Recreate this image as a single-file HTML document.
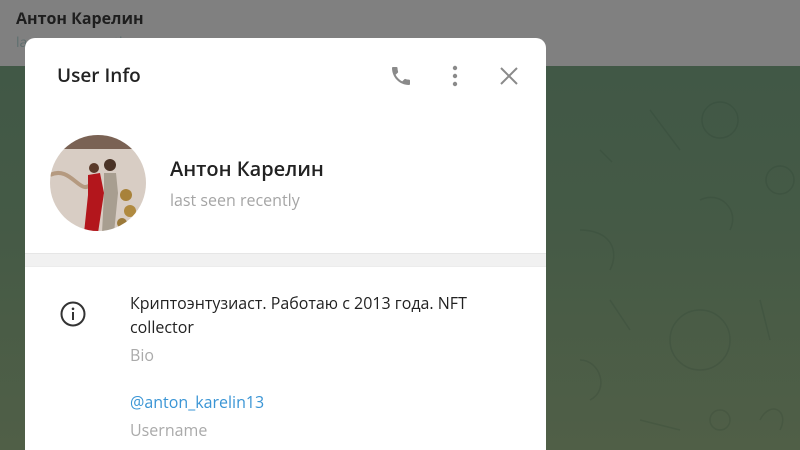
<!DOCTYPE html>
<html style="width:800px;height:450px;overflow:hidden"><head><meta charset="utf-8"><style>
*{margin:0;padding:0;box-sizing:border-box}
body{width:800px;height:450px;overflow:hidden;font-family:"Open Sans","Liberation Sans","DejaVu Sans",sans-serif;position:relative;background:linear-gradient(180deg,#3f5746 0%,#455a46 50%,#505f47 100%)}
.top{position:absolute;left:0;top:0;width:800px;height:66px;background:#808080}
.top .n{position:absolute;left:16px;top:7px;font-size:16px;font-weight:bold;color:#1e1e1e}
.top .s{position:absolute;left:16px;top:33px;font-size:14px;color:#5e6e6e}
.modal{position:absolute;left:25px;top:38px;width:521px;height:412px;background:#fff;border-radius:10px 10px 0 0;overflow:hidden}
.title{position:absolute;left:32px;top:24px;font-size:19px;color:#222;font-weight:600}
.name{position:absolute;left:145px;top:117px;font-size:20px;color:#222;font-weight:600}
.seen{position:absolute;left:145px;top:151px;font-size:16px;color:#a5a5a5}
.sep{position:absolute;left:0;top:215px;width:521px;height:14px;background:#f1f1f1;border-top:1px solid #e6e6e6;border-bottom:1px solid #ececec}
.t{position:absolute;left:105px;font-size:16px;color:#222;line-height:24px}
.g{position:absolute;left:105px;font-size:16px;color:#aaa}
.pat{position:absolute;fill:none;stroke:rgba(30,50,35,.14);stroke-width:1.5}
</style></head><body>
<svg class="pat" width="800" height="450" style="left:0;top:0">
<circle cx="720" cy="120" r="18"/><path d="M650 110l30 40M700 200c20-10 40 10 30 30"/><circle cx="700" cy="340" r="30"/><path d="M610 300l20 30M760 300l10 40M580 360c20 0 30 30 10 40M640 420l40 10M760 420c10-20 30-10 20 10M600 150l12 12M580 230c30 0 40 20 30 40"/><circle cx="720" cy="420" r="10"/><circle cx="780" cy="180" r="14"/>
</svg>
<div class="top"><div class="n">Антон Карелин</div><div class="s">last seen recently</div></div>
<div class="modal">
<div class="title">User Info</div>
<svg style="position:absolute;left:364px;top:26px" width="24" height="24" viewBox="0 0 24 24"><path d="M6.6 10.8c1.4 2.8 3.8 5.1 6.6 6.6l2.2-2.2c.3-.3.7-.4 1-.2 1.1.4 2.3.6 3.6.6.6 0 1 .4 1 1V20c0 .6-.4 1-1 1C10.6 21 3 13.4 3 4c0-.6.4-1 1-1h3.5c.6 0 1 .4 1 1 0 1.3.2 2.5.6 3.6.1.3 0 .7-.2 1z" fill="#8a8a8a"/></svg>
<svg style="position:absolute;left:420px;top:26px" width="20" height="24"><circle cx="10" cy="4" r="2.2" fill="#8a8a8a"/><circle cx="10" cy="12" r="2.2" fill="#8a8a8a"/><circle cx="10" cy="20" r="2.2" fill="#8a8a8a"/></svg>
<svg style="position:absolute;left:474px;top:28px" width="20" height="20"><path d="M2 2L18 18M18 2L2 18" stroke="#8a8a8a" stroke-width="2"/></svg>
<svg style="position:absolute;left:25px;top:97px" width="96" height="96" viewBox="0 0 96 96"><defs><clipPath id="c"><circle cx="48" cy="48" r="48"/></clipPath></defs><g clip-path="url(#c)"><rect width="96" height="96" fill="#d8cdc4"/><rect width="96" height="14" fill="#7a6254"/><path d="M0 40c20-10 30 20 40 10" stroke="#b59a80" stroke-width="4" fill="none"/><path d="M38 40l12-2 4 20-6 40h-14l4-38z" fill="#b3161c"/><circle cx="44" cy="33" r="5" fill="#5a3a2a"/><path d="M54 38h12l2 20-4 40h-12l2-40z" fill="#a89e90"/><circle cx="60" cy="30" r="6" fill="#4a3326"/><circle cx="76" cy="60" r="6" fill="#a8823a"/><circle cx="80" cy="76" r="6" fill="#b08a40"/><circle cx="72" cy="88" r="5" fill="#9c7a3a"/></g></svg>
<div class="name">Антон Карелин</div>
<div class="seen">last seen recently</div>
<div class="sep"></div>
<svg style="position:absolute;left:34px;top:262px" width="28" height="28"><circle cx="14" cy="14" r="11.5" fill="none" stroke="#333" stroke-width="2"/><rect x="13" y="12" width="2" height="8" fill="#333"/><circle cx="14" cy="8.8" r="1.3" fill="#333"/></svg>
<div class="t" style="top:253px">Криптоэнтузиаст. Работаю с 2013 года. NFT<br>collector</div>
<div class="g" style="top:306px">Bio</div>
<div class="t" style="top:352px;color:#3a95d5">@anton_karelin13</div>
<div class="g" style="top:381px">Username</div>
</div>
</body></html>
